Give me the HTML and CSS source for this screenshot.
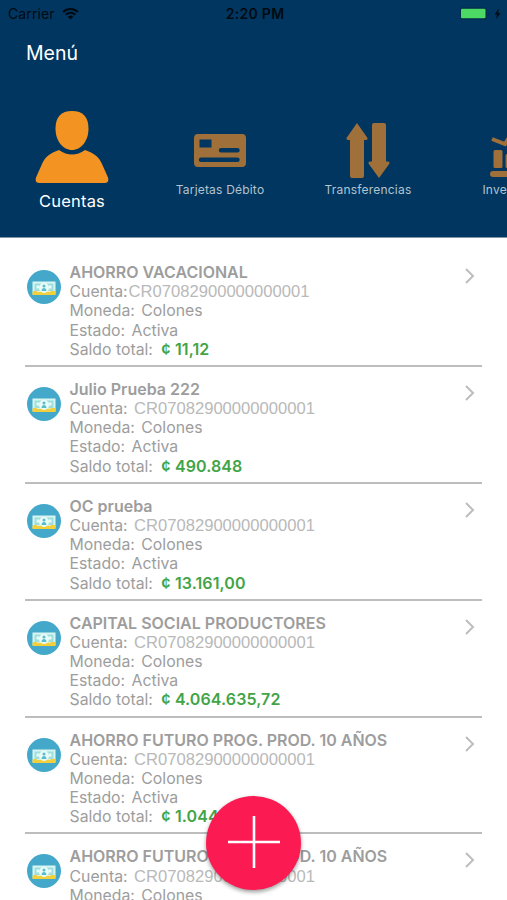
FILE: index.html
```html
<!DOCTYPE html>
<html lang="es">
<head>
    <meta charset="UTF-8">
    <meta name="viewport" content="width=device-width, initial-scale=1.0">
    <title>Menú</title>
    <link rel="stylesheet" href="styles.css">
</head>
<body>
    <svg class="sprite">
        <symbol id="money" viewBox="0 0 34 34">
            <circle cx="17" cy="17" r="17" fill="#43a8c9"/>
            <rect x="5.5" y="11.5" width="23" height="12.5" fill="#d9f5f1"/>
            <path d="M7.500 13.500H14V21H7.500zM20 13.500h6.500V21H20z" fill="#9edfdd"/>
            <path d="M9.500 15.500h3v3h-3zM21.500 15.500h3v3h-3z" fill="#e9fbf7"/>
            <path d="M5.500 22l1-1h3l1 1h2l1-.8h1.500l1 1.300h2l1-1.300h2l1 .8h1l1-1h4l.5 1v3h-23z" fill="#f3cf3c"/>
            <circle cx="17" cy="18" r="5" fill="#e9fbf7"/>
            <circle cx="17" cy="16" r="1.500" fill="#58bccb"/>
            <path d="M14.500 21c0-4 5-4 5 0z" fill="#58bccb"/>
        </symbol>
        <symbol id="chevron" viewBox="0 0 10 16">
            <path d="M1 1l7 7-7 7" fill="none" stroke="#bdbdbd" stroke-width="2"/>
        </symbol>
    </svg>

    <div class="header">
        <div class="status-bar">
            <div class="carrier">
                <span>Carrier</span>
                <svg width="17" height="13" viewBox="0 0 17 13">
                    <path d="M1.200 5a10.500 10.500 0 0 1 14.600 0M3.800 7.700a6.600 6.600 0 0 1 9.400 0" fill="none" stroke="#000a12" stroke-width="2.100"/>
                    <path d="M5.800 9.700a4 4 0 0 1 5.400 0l-2.700 2.800z" fill="#000a12"/>
                </svg>
            </div>
            <div class="time">2:20 PM</div>
            <div class="battery">
                <svg width="42" height="14" viewBox="0 0 42 14">
                    <rect x="0" y=".5" width="27" height="12" rx="2.500" fill="#002a4a"/>
                    <rect x="1" y="1.800" width="24.500" height="9.400" rx="1" fill="#4cd964"/>
                    <path d="M28 5q1.500 2 0 4z" fill="#002a4a"/>
                    <path d="M39 1.500L34.500 7.500H37l-.8 4.500 4.300-6H38z" fill="#000a12"/>
                </svg>
            </div>
        </div>
        <h1 class="title">Menú</h1>
        <div class="menu">
            <div class="menu-item active">
                <svg width="74" height="74" viewBox="0 0 74 74">
                    <path d="M37 1c11 0 16.500 6 16.500 17.500C53.500 31 46 40 37 40S20.500 31 20.500 18.500C20.500 7 26 1 37 1z"/>
                    <path d="M24 40q13 9 26 0c9 3 14 7 17 14l6 13.500q1.500 5.500-3.500 5.500h-65q-5 0-3.500-5.500L7 54c3-7 8-11 17-14z"/>
                </svg>
                <span>Cuentas</span>
            </div>
            <div class="menu-item">
                <svg width="52" height="56" viewBox="0 0 52 56">
                    <path fill-rule="evenodd" d="M4 11h44q4 0 4 4v25q0 4-4 4H4q-4 0-4-4V15q0-4 4-4zM5.500 16.500v8h12v-8zM27 25h16.500a2.200 2.200 0 0 1 0 4.400H27a2.200 2.200 0 0 1 0-4.400zM7 34.500h36.500a2.200 2.200 0 0 1 0 4.400H7a2.200 2.200 0 0 1 0-4.400z"/>
                </svg>
                <span>Tarjetas Débito</span>
            </div>
            <div class="menu-item">
                <svg width="44" height="56" viewBox="0 0 44 56">
                    <path d="M11 0l10.500 15q.5 2-1.500 2h-2v36q0 2-2 2H6q-2 0-2-2V17H2q-2 0-1.500-2z"/>
                    <path d="M28 0h10q2 0 2 2v36.500h2q2 0 1.500 2L33 55 22.500 40.500q-.5-2 1.500-2h2V2q0-2 2-2z"/>
                </svg>
                <span>Transferencias</span>
            </div>
            <div class="menu-item">
                <svg width="52" height="56" viewBox="0 0 52 56">
                    <path d="M2 16l13 5L25 5l10 8L50 2" fill="none" stroke="#a0703a" stroke-width="4"/>
                    <path d="M5 27h6q1.500 0 1.500 1.500v15Q12.500 45 11 45H5q-1.500 0-1.500-1.500v-15Q3.500 27 5 27zM17 31h6.500v14H17q-1.500 0-1.500-1.500v-11Q15.500 31 17 31zM28 24h9v21h-9zM41 19h8v26h-8z"/>
                    <rect x="0" y="48" width="52" height="6" rx="3"/>
                </svg>
                <span>Inversiones</span>
            </div>
        </div>
    </div>

    <div class="accounts">
        <div class="account">
            <svg class="account-icon"><use href="#money"/></svg>
            <div class="account-info">
                <h2>AHORRO VACACIONAL</h2>
                <p>Cuenta:<span class="number close">CR07082900000000001</span></p>
                <p>Moneda: <span>Colones</span></p>
                <p>Estado: <span>Activa</span></p>
                <p>Saldo total: <span class="balance">¢ 11,12</span></p>
            </div>
            <svg class="chevron"><use href="#chevron"/></svg>
        </div>
        <div class="account">
            <svg class="account-icon"><use href="#money"/></svg>
            <div class="account-info">
                <h2>Julio Prueba 222</h2>
                <p>Cuenta: <span class="number">CR07082900000000001</span></p>
                <p>Moneda: <span>Colones</span></p>
                <p>Estado: <span>Activa</span></p>
                <p>Saldo total: <span class="balance">¢ 490.848</span></p>
            </div>
            <svg class="chevron"><use href="#chevron"/></svg>
        </div>
        <div class="account">
            <svg class="account-icon"><use href="#money"/></svg>
            <div class="account-info">
                <h2>OC prueba</h2>
                <p>Cuenta: <span class="number">CR07082900000000001</span></p>
                <p>Moneda: <span>Colones</span></p>
                <p>Estado: <span>Activa</span></p>
                <p>Saldo total: <span class="balance">¢ 13.161,00</span></p>
            </div>
            <svg class="chevron"><use href="#chevron"/></svg>
        </div>
        <div class="account">
            <svg class="account-icon"><use href="#money"/></svg>
            <div class="account-info">
                <h2>CAPITAL SOCIAL PRODUCTORES</h2>
                <p>Cuenta: <span class="number">CR07082900000000001</span></p>
                <p>Moneda: <span>Colones</span></p>
                <p>Estado: <span>Activa</span></p>
                <p>Saldo total: <span class="balance">¢ 4.064.635,72</span></p>
            </div>
            <svg class="chevron"><use href="#chevron"/></svg>
        </div>
        <div class="account">
            <svg class="account-icon"><use href="#money"/></svg>
            <div class="account-info">
                <h2>AHORRO FUTURO PROG. PROD. 10 AÑOS</h2>
                <p>Cuenta: <span class="number">CR07082900000000001</span></p>
                <p>Moneda: <span>Colones</span></p>
                <p>Estado: <span>Activa</span></p>
                <p>Saldo total: <span class="balance">¢ 1.044</span></p>
            </div>
            <svg class="chevron"><use href="#chevron"/></svg>
        </div>
        <div class="account">
            <svg class="account-icon"><use href="#money"/></svg>
            <div class="account-info">
                <h2>AHORRO FUTURO PROG. PROD. 10 AÑOS</h2>
                <p>Cuenta: <span class="number">CR07082900000000001</span></p>
                <p>Moneda: <span>Colones</span></p>
            </div>
            <svg class="chevron"><use href="#chevron"/></svg>
        </div>
    </div>

    <button class="add-button">
        <svg width="52" height="52" viewBox="0 0 52 52">
            <path d="M26 0v52M0 26h52" stroke="#fff" stroke-width="2.600"/>
        </svg>
    </button>
</body>
</html>
```

FILE: styles.css
```css
html, body {
    height: 100%;
    margin: 0;
    padding: 0;
}

body {
    overflow: hidden;
    background: #fff;
    font-family: Inter, "Liberation Sans", sans-serif;
}

.sprite {
    display: none;
}

.header {
    height: 237px;
    overflow: hidden;
    background: #00365f;
    border-bottom: 1px solid #8095a8;
}

.status-bar {
    display: grid;
    grid-template-columns: 1fr auto 1fr;
    align-items: center;
    height: 27px;
    padding: 0 5px 0 8px;
    color: #000a12;
    font-size: 14px;
}

.carrier {
    display: flex;
    align-items: center;
    gap: 7px;
    letter-spacing: 0.1px;
}

.time {
    font-weight: 600;
    letter-spacing: 0.3px;
}

.battery {
    display: flex;
    justify-content: flex-end;
}

.title {
    margin: 13px 0 0 26px;
    color: #fff;
    font-size: 19.5px;
    font-weight: 400;
    line-height: 26px;
}

.menu {
    display: flex;
    height: 150px;
    margin-top: 44px;
    margin-left: -2px;
}

.menu-item {
    display: flex;
    flex: none;
    flex-direction: column;
    align-items: center;
    width: 148px;
    padding-top: 13px;
    color: #b3c3cf;
    font-size: 12px;
    letter-spacing: 0.2px;
    line-height: 21px;
    fill: #a0703a;
}

.menu-item.active {
    padding-top: 0;
    color: #fff;
    font-size: 16.5px;
    line-height: 34px;
    fill: #f39322;
}

.accounts {
    padding: 12px 25px 0;
}

.account {
    display: flex;
    box-sizing: border-box;
    height: 116.9px;
    padding-top: 13px;
    border-bottom: 2px solid #bdbdbd;
}

.account-icon {
    width: 34px;
    height: 34px;
    margin: 7px 9px 0 1.5px;
}

.account-info {
    flex: 1;
    color: #9d9d9d;
    font-size: 15.8px;
    line-height: 19.2px;
    white-space: nowrap;
}

.account-info h2 {
    margin: 0;
    font-size: 16px;
    font-weight: 600;
    line-height: 19.2px;
}

.account-info p {
    height: 19.2px;
    margin: 0;
}

.account-info span {
    margin-left: 2px;
}

.account-info .number {
    color: #b9b9b9;
    font-family: "Liberation Sans", Arial, sans-serif;
    font-size: 16.6px;
}

.account-info .close {
    margin-left: 1px;
}

.account-info .balance {
    margin-left: 4px;
    color: #42a447;
    font-size: 16px;
    font-weight: 600;
    letter-spacing: 0.1px;
}

.chevron {
    width: 10px;
    height: 16px;
    margin: 5px 7px 0 0;
}

.add-button {
    position: absolute;
    top: 796px;
    left: 206px;
    display: flex;
    align-items: center;
    justify-content: center;
    width: 95px;
    height: 94px;
    padding: 0 0 2px;
    border: 0;
    border-radius: 50%;
    background: #fb1b52;
    box-shadow: 0 2px 4px rgba(0, 0, 0, 0.4);
}
```
